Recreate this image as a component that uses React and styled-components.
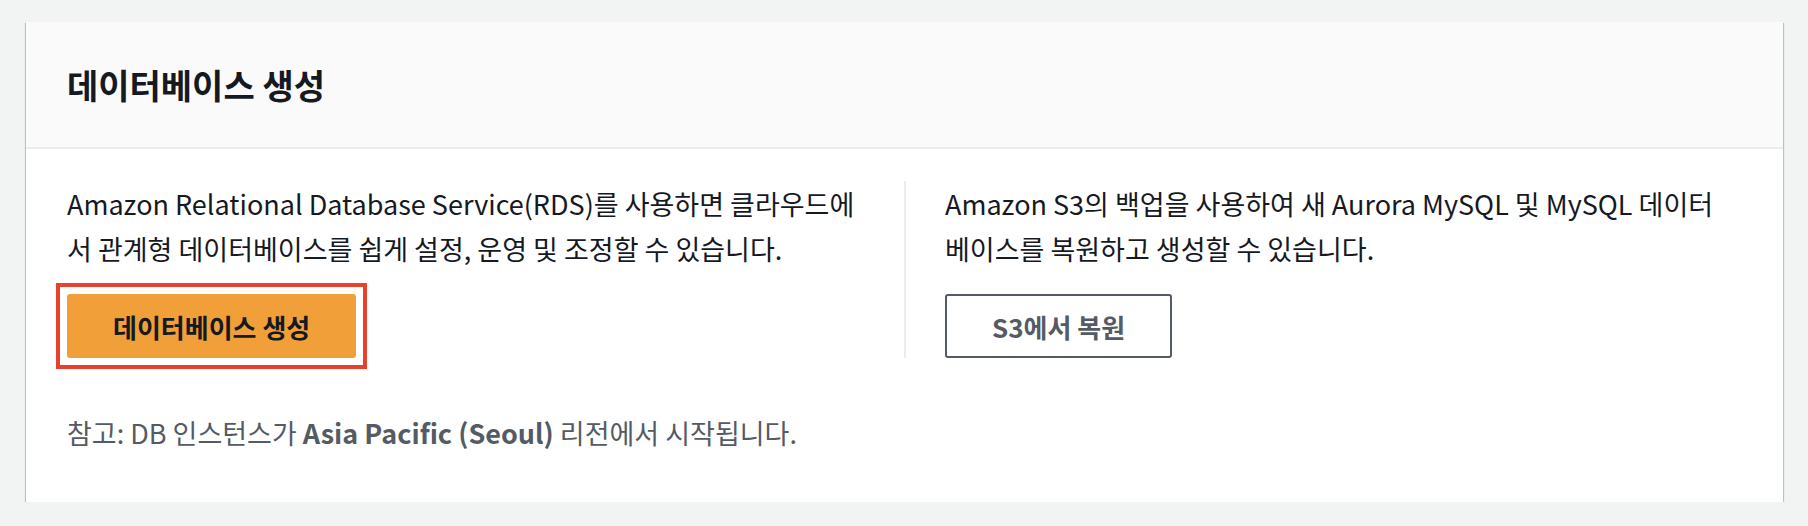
import styled, { createGlobalStyle } from "styled-components"

const GlobalStyle = createGlobalStyle`
  body {
    margin: 0;
    background: #f2f3f3;
    font-family: "Noto Sans CJK KR", "Noto Sans", sans-serif;
    color: #16191f;
  }
`

const Card = styled.section`
  margin: 22px 25px 0 26px;
  background: #fff;
  box-shadow: 0 1px 1px 0 rgba(0, 28, 36, 0.5), 1px 1px 1px 0 rgba(0, 28, 36, 0.15),
    -1px 1px 1px 0 rgba(0, 28, 36, 0.15);
`

const Header = styled.header`
  height: 125px;
  display: flex;
  align-items: center;
  padding: 0 41px;
  background: #fafafa;
  border-bottom: 2px solid #eaeded;

  h2 {
    margin: 0;
    font-size: 34px;
    font-weight: 700;
    line-height: 1;
  }
`

const Body = styled.div`
  padding: 32px 42px 47px 41px;
`

const Columns = styled.div`
  display: grid;
  grid-template-columns: 1fr 1fr;
`

const Column = styled.div`
  display: flex;
  flex-direction: column;
  align-items: flex-start;
  gap: 23px;
  padding: ${(p) => (p.divided ? "0 0 0 39px" : "0 40px 0 0")};
  border-left: ${(p) => (p.divided ? "2px solid #eaeded" : "none")};

  p {
    margin: 0;
    font-size: 27px;
    line-height: 45px;
  }
`

const Button = styled.button`
  position: relative;
  height: 64px;
  padding: 0 ${(p) => (p.primary ? "44px" : "45px")};
  font-family: inherit;
  font-size: 26px;
  font-weight: 700;
  border-radius: 3px;
  cursor: pointer;
  color: ${(p) => (p.primary ? "#16191f" : "#545b64")};
  background: ${(p) => (p.primary ? "#f19f39" : "#fff")};
  border: 2px solid ${(p) => (p.primary ? "#f19f39" : "#545b64")};

  /* red highlight box drawn around the primary action */
  &::after {
    content: "";
    display: ${(p) => (p.highlighted ? "block" : "none")};
    position: absolute;
    inset: -13px;
    border: 4px solid #e8402a;
    pointer-events: none;
  }
`

const Note = styled.p`
  margin: 52px 0 0;
  font-size: 27px;
  line-height: 45px;
  color: #545b64;

  b {
    font-weight: 700;
  }
`

export default function App() {
  return (
    <>
      <GlobalStyle />
      <Card>
        <Header>
          <h2>데이터베이스 생성</h2>
        </Header>
        <Body>
          <Columns>
            <Column>
              <p>
                Amazon Relational Database Service(RDS)를 사용하면 클라우드에
                <br />서 관계형 데이터베이스를 쉽게 설정, 운영 및 조정할 수 있습니다.
              </p>
              <Button primary highlighted>
                데이터베이스 생성
              </Button>
            </Column>
            <Column divided>
              <p>
                Amazon S3의 백업을 사용하여 새 Aurora MySQL 및 MySQL 데이터
                <br />베이스를 복원하고 생성할 수 있습니다.
              </p>
              <Button>S3에서 복원</Button>
            </Column>
          </Columns>
          <Note>
            참고: DB 인스턴스가 <b>Asia Pacific (Seoul)</b> 리전에서 시작됩니다.
          </Note>
        </Body>
      </Card>
    </>
  )
}
